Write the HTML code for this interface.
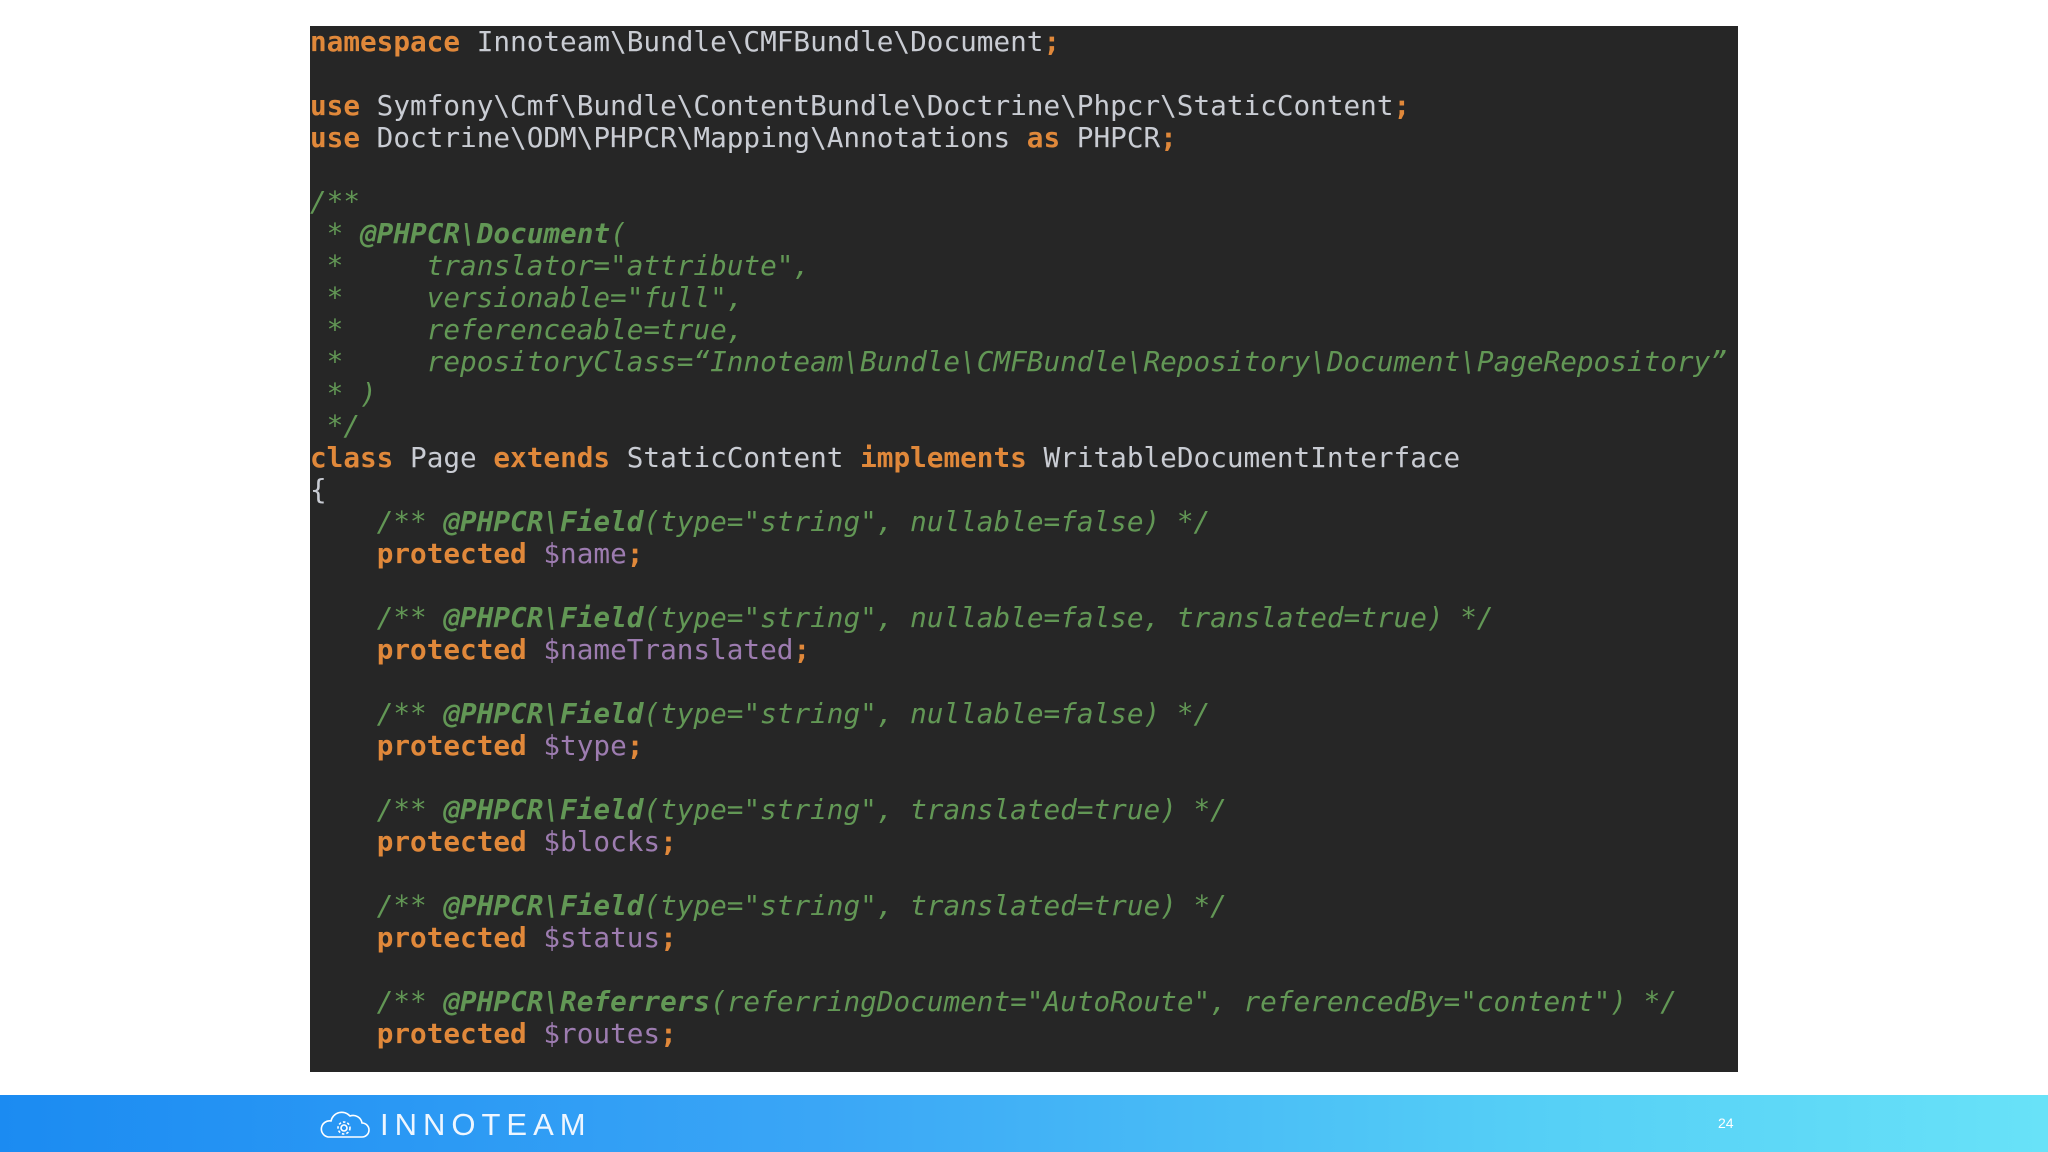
<!DOCTYPE html>
<html><head><meta charset="utf-8"><style>
html,body{margin:0;padding:0;width:2048px;height:1152px;background:#fff;overflow:hidden}
.box{position:absolute;left:310px;top:26px;width:1428px;height:1046px;background:#262626}
pre{margin:0;position:absolute;left:310px;top:26px;font-family:"DejaVu Sans Mono",monospace;font-size:27.7px;line-height:32px;color:#c9ccd3}
.k{color:#e0883a;font-weight:bold}
.c{color:#629755;font-style:italic}
.a{color:#629755;font-style:italic;font-weight:bold}
.v{color:#9d7cb0}
.footer{position:absolute;left:0;top:1095px;width:2048px;height:57px;background:linear-gradient(90deg,#1b8bf2 0%,#3aa6f6 40%,#55cff6 75%,#68e2f8 100%)}
.logo{position:absolute;left:380px;top:12px;font-family:"Liberation Sans",sans-serif;font-size:31px;color:#eef6ff;letter-spacing:6px;font-weight:normal}
.num{position:absolute;left:1718px;top:20px;font-family:"Liberation Sans",sans-serif;font-size:14px;color:#fff}
</style></head><body>
<div class="box"></div>
<pre><span class="k">namespace</span> Innoteam\Bundle\CMFBundle\Document<span class="k">;</span>

<span class="k">use</span> Symfony\Cmf\Bundle\ContentBundle\Doctrine\Phpcr\StaticContent<span class="k">;</span>
<span class="k">use</span> Doctrine\ODM\PHPCR\Mapping\Annotations <span class="k">as</span> PHPCR<span class="k">;</span>

<span class="c">/**
 * <span class="a">@PHPCR\Document</span>(
 *     translator="attribute",
 *     versionable="full",
 *     referenceable=true,
 *     repositoryClass=“Innoteam\Bundle\CMFBundle\Repository\Document\PageRepository”
 * )
 */</span>
<span class="k">class</span> Page <span class="k">extends</span> StaticContent <span class="k">implements</span> WritableDocumentInterface
{
    <span class="c">/** <span class="a">@PHPCR\Field</span>(type="string", nullable=false) */</span>
    <span class="k">protected</span> <span class="v">$name</span><span class="k">;</span>

    <span class="c">/** <span class="a">@PHPCR\Field</span>(type="string", nullable=false, translated=true) */</span>
    <span class="k">protected</span> <span class="v">$nameTranslated</span><span class="k">;</span>

    <span class="c">/** <span class="a">@PHPCR\Field</span>(type="string", nullable=false) */</span>
    <span class="k">protected</span> <span class="v">$type</span><span class="k">;</span>

    <span class="c">/** <span class="a">@PHPCR\Field</span>(type="string", translated=true) */</span>
    <span class="k">protected</span> <span class="v">$blocks</span><span class="k">;</span>

    <span class="c">/** <span class="a">@PHPCR\Field</span>(type="string", translated=true) */</span>
    <span class="k">protected</span> <span class="v">$status</span><span class="k">;</span>

    <span class="c">/** <span class="a">@PHPCR\Referrers</span>(referringDocument="AutoRoute", referencedBy="content") */</span>
    <span class="k">protected</span> <span class="v">$routes</span><span class="k">;</span></pre>
<div class="footer">
<svg style="position:absolute;left:320px;top:14px" width="50" height="30" viewBox="0 0 50 30" fill="none" stroke="#fff" stroke-width="1.6">
<path d="M8 28 H42 A7 7 0 0 0 42 14 A9 9 0 0 0 30 7 A11 11 0 0 0 11 12 A8 8 0 0 0 8 28 Z"/>
<circle cx="24" cy="19" r="3"/><circle cx="24" cy="19" r="6" stroke-dasharray="2.5 2"/>
</svg>
<div class="logo">INNOTEAM</div>
<div class="num">24</div>
</div>
</body></html>
